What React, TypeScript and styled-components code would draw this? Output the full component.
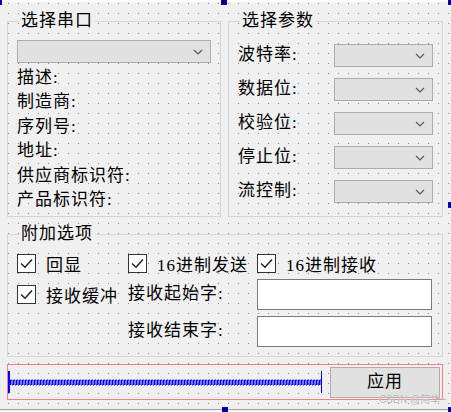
import React from "react";
import styled, { createGlobalStyle } from "styled-components";

const GlobalStyle = createGlobalStyle`
  html, body {
    margin: 0;
    padding: 0;
    background: #f0f0f0;
  }
  body {
    font-family: "Liberation Serif", "Noto Sans CJK SC", serif;
    font-size: 17px;
    color: #000;
  }
`;

// designer form with the dotted grid
const Canvas = styled.div`
  position: relative;
  width: 451px;
  height: 412px;
  overflow: hidden;
  display: flex;
  flex-direction: column;
  background-color: #f0f0f0;
  background-image: linear-gradient(to bottom, transparent 1px, #f0f0f0 1px),
    linear-gradient(to right, #8c8c8c 1px, #f0f0f0 1px);
  background-size: 10px 10px;
  background-position: 0 3px, 8px 0;
`;

const TopStrip = styled.div`
  height: 2px;
  background: #fdfdfd;
`;

const GroupRow = styled.div<{ $top?: number }>`
  display: flex;
  gap: 7px;
  margin: ${(p) => p.$top ?? 19}px 0 0 7px;
`;

const Group = styled.div<{ $w: number; $h: number }>`
  position: relative;
  box-sizing: border-box;
  width: ${(p) => p.$w}px;
  height: ${(p) => p.$h}px;
  border: 1px solid #d6d6d6;
`;

const GroupTitle = styled.span`
  position: absolute;
  top: -11px;
  left: 11px;
  padding: 0 2px;
  line-height: 20px;
  letter-spacing: 1px;
  white-space: nowrap;
  background: #f0f0f0;
`;

const PortBody = styled.div`
  display: flex;
  flex-direction: column;
  padding: 18px 9px 0;
`;

const Combo = styled.div<{ $w?: number }>`
  box-sizing: border-box;
  width: ${(p) => (p.$w ? `${p.$w}px` : "100%")};
  height: 23px;
  display: flex;
  align-items: center;
  justify-content: flex-end;
  padding-right: 7px;
  background: #e1e1e1;
  border: 1px solid #adadad;
`;

const InfoList = styled.div`
  display: flex;
  flex-direction: column;
  margin-top: 3px;
`;

const Label = styled.div`
  line-height: 24.4px;
  letter-spacing: 1px;
  white-space: nowrap;
`;

const ParamBody = styled.div`
  display: grid;
  grid-template-columns: 1fr 99px;
  grid-auto-rows: 23px;
  row-gap: 11px;
  align-items: center;
  padding: 22px 9px 0;
`;

const OptionBody = styled.div`
  display: grid;
  grid-template-columns: 111px 129px 175px;
  grid-template-rows: 20px 31px 31px;
  row-gap: 6px;
  align-items: center;
  padding: 18px 9px 0;
`;

const CheckRow = styled.div`
  display: flex;
  align-items: center;
  gap: 10px;
  white-space: nowrap;
  letter-spacing: 1px;
`;

const Box = styled.span`
  box-sizing: border-box;
  width: 19px;
  height: 19px;
  display: flex;
  background: #fff;
  border: 1px solid #333;
`;

const TextInput = styled.div`
  box-sizing: border-box;
  height: 31px;
  background: #fff;
  border: 1px solid #7a7a7a;
`;

const Footer = styled.div`
  box-sizing: border-box;
  width: 436px;
  height: 36px;
  margin: 7px 0 0 7px;
  display: flex;
  align-items: center;
  gap: 8px;
  padding-right: 2px;
  border: 1px solid #f38181;
`;

const Spacer = styled.div`
  flex: 1;
  height: 22px;
  display: flex;
  align-items: center;
  border-left: 2px solid #0000ff;
  border-right: 1px solid #0000ff;
`;

const Button = styled.div`
  box-sizing: border-box;
  width: 110px;
  height: 31px;
  display: flex;
  align-items: center;
  justify-content: center;
  line-height: 18px;
  letter-spacing: 1px;
  background: #e1e1e1;
  border: 1px solid #adadad;
`;

const BottomEdge = styled.div`
  flex: 1;
  margin-top: 9px;
  background: #f7f7f7;
  border-top: 1px solid #a0a0a0;
`;

const Handle = styled.span`
  position: absolute;
  box-sizing: border-box;
  width: 6px;
  height: 6px;
  background: #000060;
  border: 1px solid #0000ff;
`;

const Watermark = styled.span`
  position: absolute;
  right: 5px;
  bottom: 7px;
  font-family: "Liberation Sans", "Noto Sans CJK SC", sans-serif;
  font-size: 10px;
  line-height: 10px;
  color: #b4b4b4;
  text-shadow: 0 0 1px #fff;
  white-space: nowrap;
`;

const Chevron = () => (
  <svg width="10" height="6" viewBox="0 0 10 6">
    <path d="M1 1 L5 5 L9 1" fill="none" stroke="#5a5a5a" strokeWidth="1.2" />
  </svg>
);

const CheckMark = () => (
  <svg width="17" height="17" viewBox="0 0 17 17">
    <path d="M3 8.5 L7 12.2 L14 4.5" fill="none" stroke="#222" strokeWidth="1.5" />
  </svg>
);

const Check = ({ text }: { text: string }) => (
  <CheckRow>
    <Box>
      <CheckMark />
    </Box>
    {text}
  </CheckRow>
);

const ZigZag = () => (
  <svg width="100%" height="7">
    <defs>
      <pattern id="zz" width="3" height="7" patternUnits="userSpaceOnUse">
        <path d="M0.5 6 V1 H2 V6 H3" fill="none" stroke="#0000ff" strokeWidth="1" />
      </pattern>
    </defs>
    <rect width="100%" height="7" fill="url(#zz)" />
  </svg>
);

const portInfo = ["描述:", "制造商:", "序列号:", "地址:", "供应商标识符:", "产品标识符:"];
const params = ["波特率:", "数据位:", "校验位:", "停止位:", "流控制:"];
const handles = [
  { left: -4, top: -1 },
  { left: 221, top: -1 },
  { left: 448, top: -1 },
  { left: 448, top: 202 },
  { left: 448, top: 407 },
  { left: 222, top: 407 },
];

export default function App() {
  return (
    <>
      <GlobalStyle />
      <Canvas>
        <TopStrip />
        <GroupRow>
          <Group $w={214} $h={196}>
            <GroupTitle>选择串口</GroupTitle>
            <PortBody>
              <Combo>
                <Chevron />
              </Combo>
              <InfoList>
                {portInfo.map((t) => (
                  <Label key={t}>{t}</Label>
                ))}
              </InfoList>
            </PortBody>
          </Group>
          <Group $w={215} $h={196}>
            <GroupTitle>选择参数</GroupTitle>
            <ParamBody>
              {params.map((t) => (
                <React.Fragment key={t}>
                  <Label>{t}</Label>
                  <Combo $w={99}>
                    <Chevron />
                  </Combo>
                </React.Fragment>
              ))}
            </ParamBody>
          </Group>
        </GroupRow>

        <GroupRow $top={17}>
          <Group $w={436} $h={123}>
            <GroupTitle>附加选项</GroupTitle>
            <OptionBody>
              <Check text="回显" />
              <Check text="16进制发送" />
              <Check text="16进制接收" />
              <Check text="接收缓冲" />
              <Label>接收起始字:</Label>
              <TextInput />
              <span />
              <Label>接收结束字:</Label>
              <TextInput />
            </OptionBody>
          </Group>
        </GroupRow>

        <Footer>
          <Spacer>
            <ZigZag />
          </Spacer>
          <Button>应用</Button>
        </Footer>
        <BottomEdge />

        <Watermark>CSDN @简华~</Watermark>
        {handles.map((h, i) => (
          <Handle key={i} style={{ left: h.left, top: h.top }} />
        ))}
      </Canvas>
    </>
  );
}
